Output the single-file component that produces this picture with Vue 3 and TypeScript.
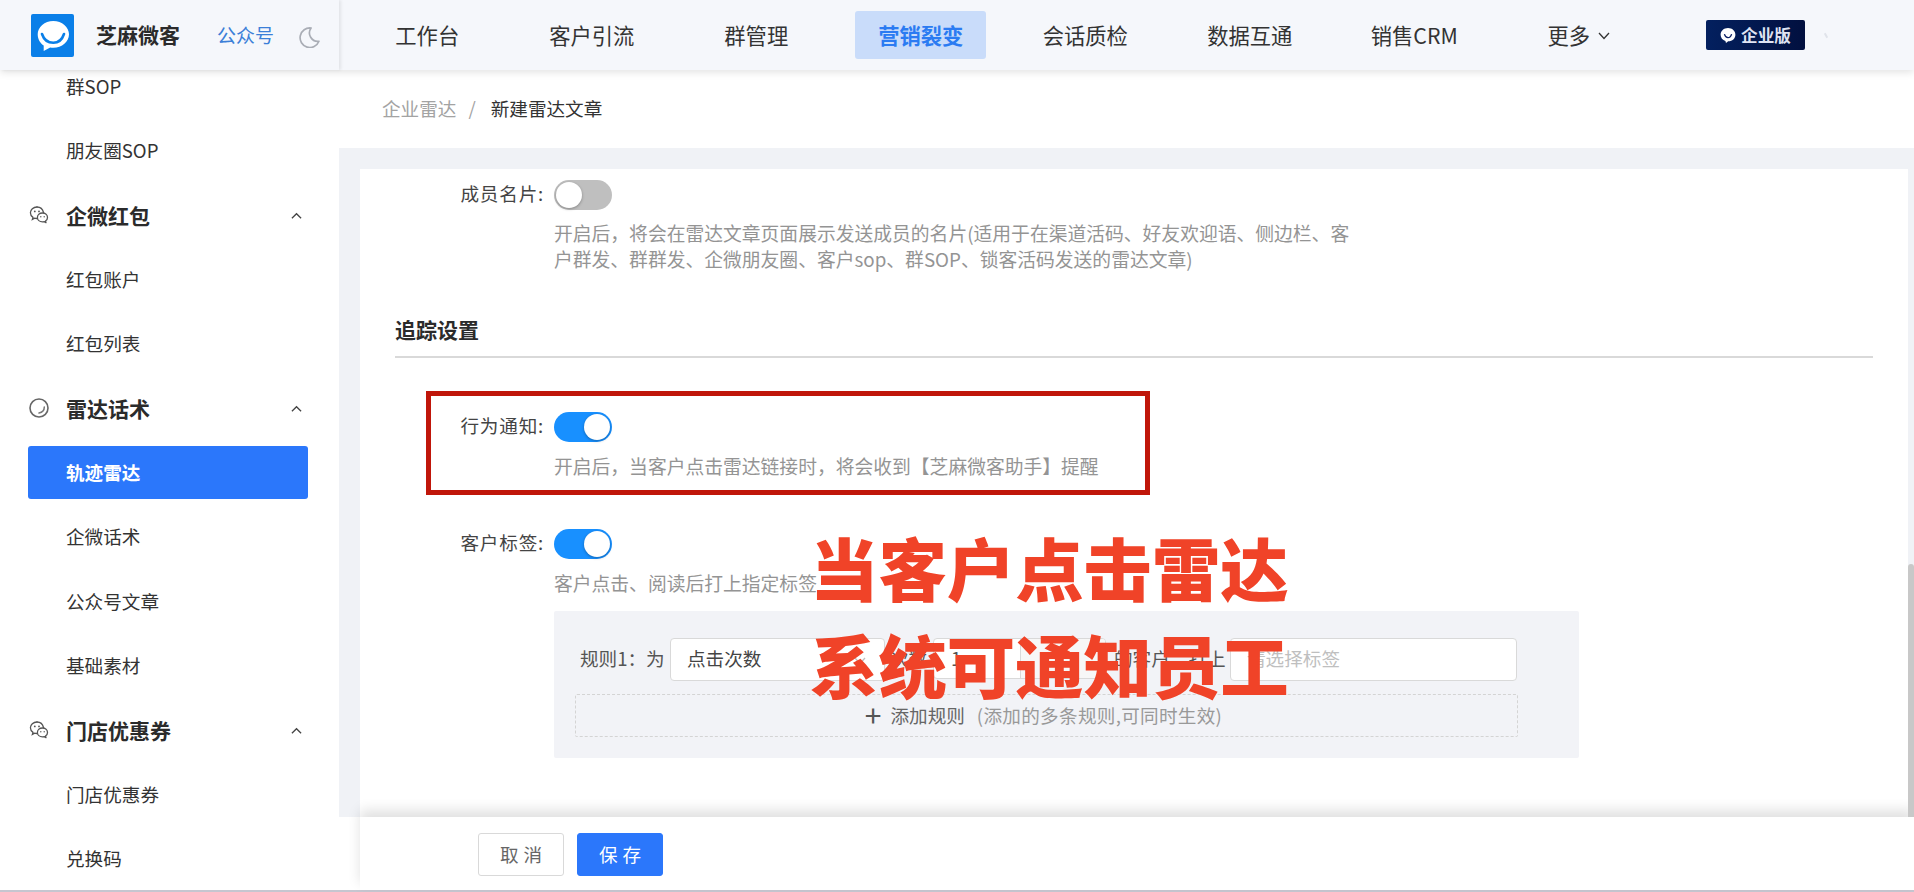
<script setup lang="ts">
interface MenuItem {
  label: string
  icon?: 'wechat' | 'radar'
  active?: boolean
}

const navItems = ['工作台', '客户引流', '群管理', '营销裂变', '会话质检', '数据互通', '销售CRM']

const menu: MenuItem[] = [
  { label: '群SOP' },
  { label: '朋友圈SOP' },
  { label: '企微红包', icon: 'wechat' },
  { label: '红包账户' },
  { label: '红包列表' },
  { label: '雷达话术', icon: 'radar' },
  { label: '轨迹雷达', active: true },
  { label: '企微话术' },
  { label: '公众号文章' },
  { label: '基础素材' },
  { label: '门店优惠券', icon: 'wechat' },
  { label: '门店优惠券' },
  { label: '兑换码' },
]
</script>

<template>
  <div class="page">
    <header class="topbar">
      <div class="brand">
        <svg class="logo" viewBox="0 0 43 43">
          <rect width="43" height="43" rx="2" fill="#0a7fe8" />
          <path d="M22.300 7C13.600 7 6.700 13 6.700 20.300c0 5.400 3.100 9.500 6 11.200V37l6.500-3.500c1 .2 2 .3 3.100.3C31 33.800 38 27.700 38 20.300 38 13 31 7 22.300 7z" fill="#fff" />
          <path d="M11 20c2 6 6.500 8.800 11.300 8.800S31 26 33 20" fill="none" stroke="#0a7fe8" stroke-width="2.600" stroke-linecap="round" />
        </svg>
        <span class="brand-name">芝麻微客</span>
        <span class="brand-link">公众号</span>
        <svg class="moon" viewBox="0 0 20 20">
          <path d="M11.500 1A9.300 9.300 0 1 0 19 13.600 8 8 0 0 1 11.500 1z" fill="none" stroke="#a9adb5" stroke-width="1.600" stroke-linejoin="round" />
        </svg>
      </div>
      <nav class="nav">
        <div v-for="item in navItems" :key="item" class="nav-item">
          <span :class="['nav-link', { 'is-active': item === '营销裂变' }]">{{ item }}</span>
        </div>
        <div class="nav-item">
          <span class="nav-link">更多<svg class="more-arrow" viewBox="0 0 12 8">
              <path d="M1 1l5 5.500L11 1" fill="none" stroke="#333" stroke-width="1.300" />
            </svg></span>
        </div>
      </nav>
      <div class="edition">
        <svg class="edition-icon" viewBox="0 0 16 16">
          <path d="M8 .5C3.800.5.600 3.400.600 7.200c0 3 2 5.400 4.800 6.200l.6 2 2.200-1.600c4.200 0 7.200-3 7.200-6.600C15.400 3.400 12.200.5 8 .5z" fill="#fff" />
          <path d="M4.400 6.600c.8 2.600 2.200 3.600 3.600 3.600s2.900-1 3.600-3.600" fill="none" stroke="#0a1f63" stroke-width="1.300" />
        </svg>
        <span>企业版</span>
      </div>
      <span class="edition-mark" />
    </header>

    <div class="body">
      <aside class="sidebar">
        <ul class="menu">
          <li v-for="(item, i) in menu" :key="i" :class="['menu-item', { 'is-group': item.icon, 'is-active': item.active }]">
            <svg v-if="item.icon === 'wechat'" class="menu-icon" viewBox="0 0 20 20">
              <path d="M8 2C4.300 2 1.400 4.600 1.400 7.800c0 1.900 1 3.500 2.600 4.600l-.6 2 2.300-1.200c.6.200 1.300.3 2 .3" fill="none" stroke="#555" stroke-width="1.300" stroke-linecap="round" />
              <path d="M14.500 7.500C13.800 4.400 11.200 2 8 2" fill="none" stroke="#555" stroke-width="1.300" stroke-linecap="round" />
              <path d="M13.500 8c-2.900 0-5.100 2-5.100 4.400s2.200 4.400 5.100 4.400c.6 0 1.100-.1 1.600-.2l1.900 1-.5-1.600c1.200-.8 2-2.100 2-3.600C18.500 10 16.300 8 13.500 8z" fill="none" stroke="#555" stroke-width="1.300" stroke-linejoin="round" />
              <circle cx="5.800" cy="6.400" r=".9" fill="#555" />
              <circle cx="10" cy="6.400" r=".9" fill="#555" />
              <circle cx="11.800" cy="11.800" r=".7" fill="#555" />
              <circle cx="15.200" cy="11.800" r=".7" fill="#555" />
            </svg>
            <svg v-else-if="item.icon === 'radar'" class="menu-icon" viewBox="0 0 20 20">
              <circle cx="10" cy="10" r="9" fill="none" stroke="#666" stroke-width="1.600" />
              <path d="M15.300 9c0 3.200-1.900 5.400-5.300 6" fill="none" stroke="#777" stroke-width="1.500" stroke-linecap="round" />
            </svg>
            <span>{{ item.label }}</span>
            <svg v-if="item.icon" class="menu-arrow" viewBox="0 0 12 8">
              <path d="M1 6.500L6 1.500l5 5" fill="none" stroke="#444" stroke-width="1.400" />
            </svg>
          </li>
        </ul>
      </aside>

      <main class="main">
        <div class="crumbs">
          <span class="crumb-parent">企业雷达</span>
          <span class="crumb-sep">/</span>
          <span class="crumb-current">新建雷达文章</span>
        </div>

        <div class="content">
          <div class="card">
            <div class="field first">
              <label class="field-label">成员名片:</label>
              <div class="field-body">
                <span class="toggle" />
                <p class="hint">开启后&#65292;将会在雷达文章页面展示发送成员的名片(适用于在渠道活码、好友欢迎语、侧边栏、客户群发、群群发、企微朋友圈、客户sop、群SOP、锁客活码发送的雷达文章)</p>
              </div>
            </div>

            <h3 class="section-title">追踪设置</h3>

            <div class="field notify">
              <label class="field-label">行为通知:</label>
              <div class="field-body">
                <span class="toggle on" />
                <p class="hint">开启后&#65292;当客户点击雷达链接时&#65292;将会收到【芝麻微客助手】提醒</p>
              </div>
            </div>

            <div class="field tags">
              <label class="field-label">客户标签:</label>
              <div class="field-body">
                <span class="toggle on" />
                <p class="hint">客户点击、阅读后打上指定标签</p>
                <div class="rules">
                  <div class="rule">
                    <span class="rule-label">规则1&#65306;为</span>
                    <div class="select">
                      <span>点击次数</span>
                      <svg class="select-arrow" viewBox="0 0 12 8">
                        <path d="M1 1l5 5.500L11 1" fill="none" stroke="#bfbfbf" stroke-width="1.300" />
                      </svg>
                    </div>
                    <span class="rule-text times">次数</span>
                    <div class="stepper">
                      <span class="stepper-value">1</span>
                      <span class="stepper-side" />
                    </div>
                    <span class="rule-text suffix">的客户&#65292;打上</span>
                    <div class="select tag-select">请选择标签</div>
                  </div>
                  <div class="add-rule">
                    <span class="add-plus">+</span>
                    <span class="add-text">添加规则</span>
                    <span class="add-note">(添加的多条规则,可同时生效)</span>
                  </div>
                </div>
              </div>
            </div>

            <div class="red-box" />
            <div class="overlay-text">
              <div>当客户点击雷达</div>
              <div>系统可通知员工</div>
            </div>
          </div>
          <div class="scroll-thumb" />
        </div>

        <footer class="footer">
          <button class="btn">取消</button>
          <button class="btn primary">保存</button>
        </footer>
      </main>
    </div>
    <div class="bottom-line" />
  </div>
</template>

<style scoped>
.page {
  display: flex;
  flex-direction: column;
  height: 892px;
  overflow: hidden;
  font-family: "Noto Sans CJK SC", "Noto Sans", sans-serif;
  font-size: 18.6px;
  color: #333;
  background: #fff;
}

/* 顶部导航 */
.topbar {
  position: relative;
  z-index: 5;
  flex: none;
  display: flex;
  height: 70px;
  background: #f5f7fb;
  box-shadow: 0 2px 8px rgba(0, 0, 0, 0.12);
}

.brand {
  flex: none;
  display: flex;
  align-items: center;
  width: 339px;
  padding-left: 31px;
  box-sizing: border-box;
  box-shadow: 2px 0 3px rgba(0, 0, 0, 0.08);
}

.logo {
  width: 43px;
  height: 43px;
}

.brand-name {
  margin-left: 22px;
  padding-bottom: 2px;
  font-size: 21px;
  font-weight: 700;
  color: #2b2b2b;
}

.brand-link {
  margin-left: 37px;
  padding-bottom: 2px;
  font-size: 19px;
  color: #3b7fd8;
}

.moon {
  width: 21px;
  height: 21px;
  margin-left: 25px;
  margin-top: 4px;
}

.nav {
  flex: none;
  display: flex;
  padding-left: 6px;
}

.nav-item {
  flex: 0 0 164.5px;
  display: flex;
  align-items: center;
  justify-content: center;
}

.nav-link {
  display: flex;
  align-items: center;
  height: 48px;
  padding: 0 23px 2px;
  box-sizing: border-box;
  border-radius: 3px;
  font-size: 21.3px;
  color: #333;
}

.nav-link.is-active {
  font-weight: 700;
  color: #2b7bf2;
  background: #c9dcfa;
}

.more-arrow {
  width: 12px;
  height: 8px;
  margin-left: 8px;
  margin-top: 4px;
}

.edition {
  display: flex;
  align-items: center;
  justify-content: center;
  gap: 5px;
  align-self: center;
  width: 99px;
  height: 30px;
  margin-left: 45px;
  border-radius: 2px;
  font-size: 16.6px;
  font-weight: 700;
  color: #dfe3f3;
  background: linear-gradient(90deg, #03205f, #02103f);
}

.edition-icon {
  width: 16px;
  height: 17px;
}

.edition-mark {
  align-self: center;
  width: 2px;
  height: 5px;
  margin: 0 0 0 20px;
  transform: rotate(-30deg);
  background: #e0e3ea;
}

.body {
  flex: 1;
  display: flex;
  min-height: 0;
}

/* 侧边栏 */
.sidebar {
  flex: none;
  width: 339px;
  overflow: hidden;
  background: #fff;
}

.menu {
  margin: -17px 0 0;
  padding: 0;
  list-style: none;
}

.menu-item {
  position: relative;
  display: flex;
  align-items: center;
  height: 64.4px;
  padding-left: 66px;
  box-sizing: border-box;
  color: #333;
}

.menu-item.is-group {
  padding-top: 2px;
  font-size: 21px;
  font-weight: 700;
  color: #2b2b2b;
}

.menu-item.is-active {
  font-weight: 700;
  color: #fff;
}

.menu-item.is-active::before {
  content: '';
  position: absolute;
  left: 28px;
  right: 31px;
  top: 7px;
  bottom: 5px;
  z-index: 0;
  border-radius: 3px;
  background: #2b77fb;
}

.menu-item span {
  position: relative;
}

.menu-icon {
  position: absolute;
  left: 29px;
  top: 23px;
  width: 20px;
  height: 20px;
}

.menu-arrow {
  position: absolute;
  left: 291px;
  top: 30px;
  width: 11px;
  height: 8px;
}

/* 主内容 */
.main {
  flex: 1;
  display: flex;
  flex-direction: column;
  min-width: 0;
}

.crumbs {
  flex: none;
  display: flex;
  align-items: center;
  height: 78px;
  padding: 0 0 4px 43px;
  box-sizing: border-box;
  background: #fff;
}

.crumb-parent {
  color: #a3a3a3;
}

.crumb-sep {
  margin: 0 15px 0 12px;
  color: #a3a3a3;
}

.crumb-current {
  color: #333;
}

.content {
  position: relative;
  flex: 1;
  min-height: 0;
  padding: 21px 6px 0 21px;
  overflow: hidden;
  background: #f0f2f6;
}

.card {
  position: relative;
  height: 100%;
  padding-top: 11px;
  box-sizing: border-box;
  background: #fff;
}

.field {
  display: flex;
  gap: 10px;
}

.field-label {
  flex: none;
  width: 184px;
  height: 30px;
  line-height: 25px;
  letter-spacing: 0.8px;
  text-align: right;
  color: #444;
}

.field-body {
  flex: 1;
  min-width: 0;
}

.toggle {
  position: relative;
  display: block;
  width: 58px;
  height: 30px;
  border-radius: 15px;
  background: #bfbfbf;
}

.toggle::after {
  content: '';
  position: absolute;
  left: 2px;
  top: 2px;
  width: 26px;
  height: 26px;
  border-radius: 50%;
  background: #fff;
  box-shadow: 0 1px 3px rgba(0, 0, 0, 0.3);
}

.toggle.on {
  background: #1890ff;
}

.toggle.on::after {
  left: 30px;
}

.hint {
  width: 805px;
  margin: 11px 0 2px;
  line-height: 26px;
  font-size: 18.8px;
  color: #949494;
}

.first .hint {
  margin: 10px 0 1px;
}

.section-title {
  margin: 42px 35px 0;
  padding-bottom: 13px;
  border-bottom: 2px solid #d9d9d9;
  font-size: 21px;
  line-height: 28px;
  font-weight: 700;
  color: #2b2b2b;
}

.notify {
  margin-top: 54px;
}

.tags {
  margin-top: 48px;
}

.rules {
  width: 1025px;
  height: 147px;
  margin-top: 15px;
  padding: 27px 0 0 20px;
  box-sizing: border-box;
  border-radius: 2px;
  background: #f2f3f7;
}

.rule {
  display: flex;
  align-items: flex-start;
  height: 43px;
  line-height: 39px;
  color: #555;
}

.rule-label {
  width: 96px;
  padding-left: 6px;
  box-sizing: border-box;
  white-space: nowrap;
}

.select {
  position: relative;
  width: 215px;
  height: 43px;
  padding-left: 16px;
  box-sizing: border-box;
  border: 1px solid #d9d9d9;
  border-radius: 4px;
  background: #fff;
  color: #444;
  line-height: 38px;
}

.select-arrow {
  position: absolute;
  right: 18px;
  top: 18px;
  width: 12px;
  height: 8px;
}

.rule-text {
  white-space: nowrap;
}

.times {
  width: 48px;
  padding-left: 5px;
  box-sizing: border-box;
}

.stepper {
  display: flex;
  width: 173px;
  height: 41px;
  box-sizing: border-box;
  border: 1px solid #d9d9d9;
  border-radius: 4px;
  background: #fff;
  overflow: hidden;
}

.stepper-value {
  width: 87px;
  padding-left: 17px;
  box-sizing: border-box;
  line-height: 37px;
  border-right: 1px solid #d9d9d9;
}

.stepper-side {
  flex: 1;
  background: #f7f7f7;
}

.suffix {
  width: 124px;
  padding-left: 8px;
  box-sizing: border-box;
}

.tag-select {
  width: 287px;
  color: #bfbfbf;
}

.add-rule {
  display: flex;
  align-items: center;
  justify-content: center;
  width: 943px;
  height: 43px;
  margin-top: 13px;
  margin-left: 1px;
  padding: 0 6px 3px 0;
  box-sizing: border-box;
  border: 1px dashed #d4d4d4;
  border-radius: 2px;
}

.add-plus {
  font-size: 30px;
  line-height: 1;
  color: #555;
}

.add-text {
  margin-left: 9px;
  color: #666;
}

.add-note {
  margin-left: 12px;
  letter-spacing: 0.3px;
  color: #999;
}

/* 截图上的标注 */
.red-box {
  position: absolute;
  left: 66px;
  top: 222px;
  width: 724px;
  height: 104px;
  box-sizing: border-box;
  border: 5px solid #c0160a;
}

.overlay-text {
  position: absolute;
  left: 450px;
  top: 349px;
  font-size: 68.4px;
  line-height: 97px;
  font-weight: 900;
  color: #f04328;
  white-space: nowrap;
}

.scroll-thumb {
  position: absolute;
  right: 0;
  top: 416px;
  z-index: 3;
  width: 6px;
  height: 273px;
  border-radius: 3px 3px 0 0;
  background: #c8c8c8;
}

.footer {
  position: relative;
  z-index: 2;
  flex: none;
  display: flex;
  gap: 13px;
  height: 73px;
  margin-left: 21px;
  padding: 16px 0 0 118px;
  box-sizing: border-box;
  background: #fff;
  box-shadow: 0 -7px 12px rgba(0, 0, 0, 0.12);
}

.btn {
  width: 86px;
  height: 43px;
  padding: 0 0 2px;
  border: 1px solid #d9d9d9;
  border-radius: 3px;
  font-family: inherit;
  font-size: 18.6px;
  letter-spacing: 5px;
  text-indent: 5px;
  color: #666;
  background: #fff;
}

.btn.primary {
  border-color: #2b77fb;
  color: #fff;
  background: #2b77fb;
}

.bottom-line {
  flex: none;
  height: 2px;
  background: #c6c6d0;
}
</style>
